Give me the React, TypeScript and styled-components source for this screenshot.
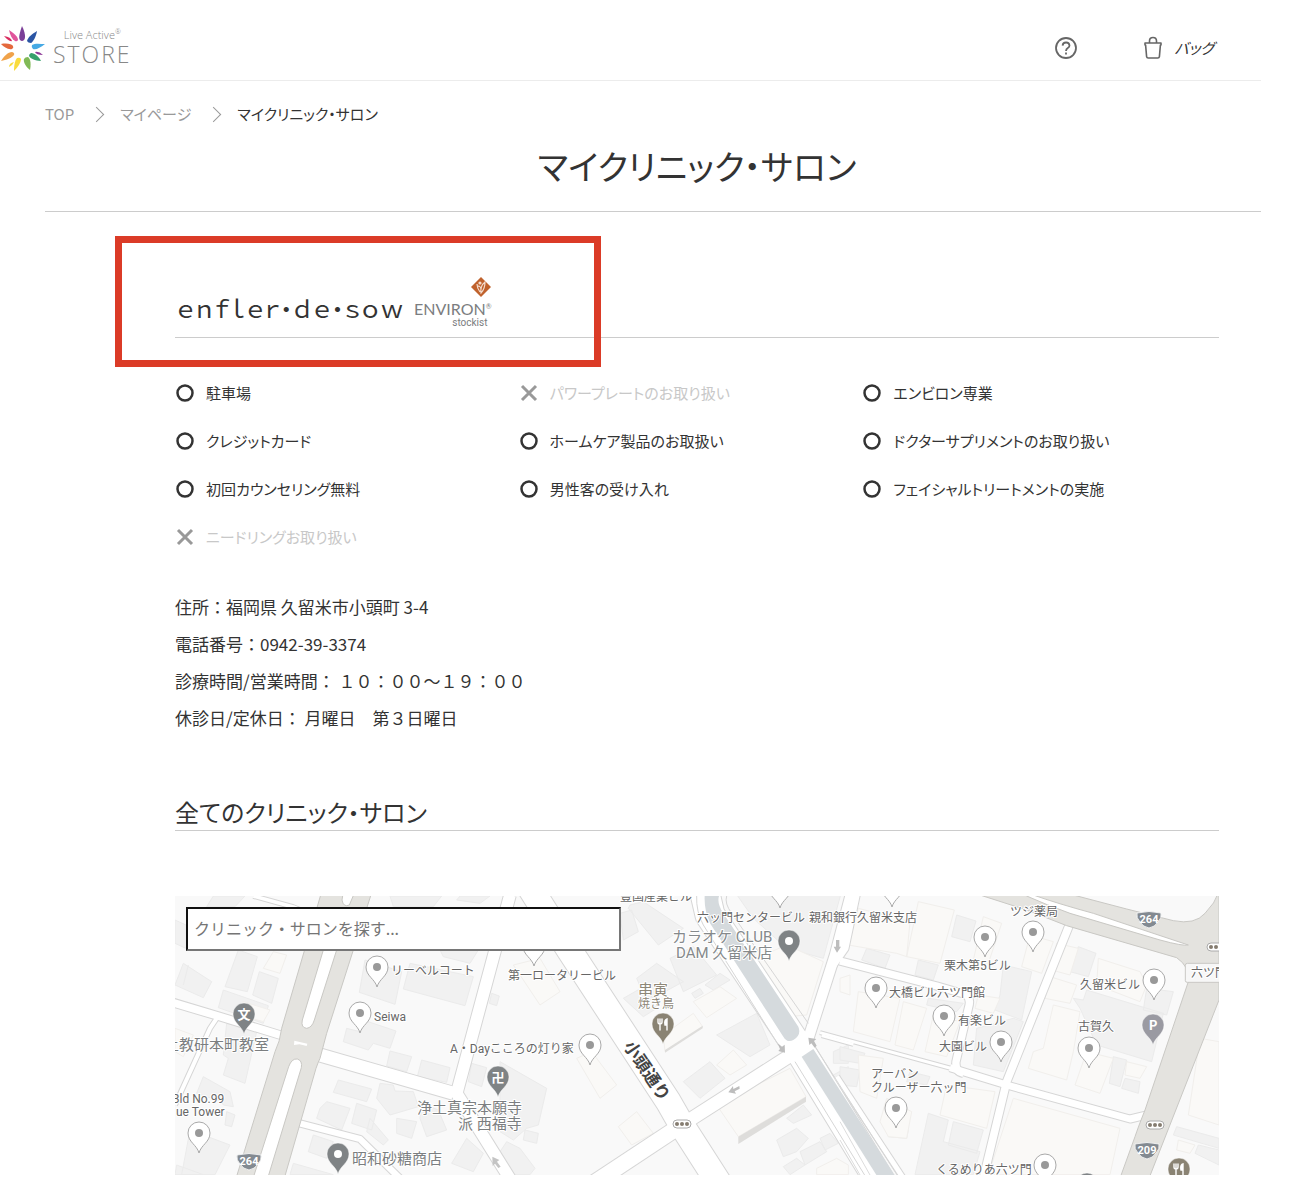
import React from "react";
import styled, { createGlobalStyle } from "styled-components";

const GlobalStyle = createGlobalStyle`
  *, *::before, *::after { box-sizing: border-box; }
  body {
    margin: 0;
    background: #fff;
    color: #333;
    font-family: "Noto Sans CJK JP", "Noto Sans", sans-serif;
    font-size: 16px;
  }
`;

const Page = styled.div`
  padding: 0 45px 11px 0;
`;

const Header = styled.header`
  display: flex;
  align-items: flex-end;
  justify-content: space-between;
  height: 81px;
  border-bottom: 1px solid #ececec;
`;

const LogoLink = styled.a`
  display: flex;
  align-items: flex-start;
  gap: 8px;
  padding-bottom: 8px;
  color: #888;
  text-decoration: none;
`;

const LogoWords = styled.span`
  display: grid;
  justify-items: center;
  padding-top: 1px;
  font-family: "Open Sans", "Noto Sans", sans-serif;
  font-weight: 300;
`;

const LogoSmall = styled.span`
  display: flex;
  align-items: flex-start;
  font-size: 11px;
  line-height: 16px;
`;

const Registered = styled.span`
  font-size: 7px;
  line-height: 10px;
`;

const LogoLarge = styled.span`
  font-size: 23px;
  line-height: 22px;
  letter-spacing: 2px;
`;

const HeaderNav = styled.nav`
  display: flex;
  align-items: center;
  gap: 64px;
  height: 64px;
  padding-right: 47px;
`;

const IconButton = styled.button`
  display: flex;
  padding: 0;
  border: 0;
  background: none;
  color: #666;
  cursor: pointer;
`;

const BagLink = styled.a`
  display: flex;
  align-items: center;
  gap: 10px;
  color: #333;
  font-size: 15px;
  font-style: italic;
  font-feature-settings: "palt";
  line-height: 24px;
  text-decoration: none;
`;

const Main = styled.main`
  padding-left: 45px;
`;

const Crumbs = styled.ol`
  display: flex;
  align-items: center;
  margin: 0;
  padding: 21px 0 0;
  list-style: none;
  font-size: 15px;
  line-height: 24px;
  font-feature-settings: "palt";
`;

const Crumb = styled.li`
  display: flex;
  align-items: center;
  color: #333;

  &:not(:last-child)::after {
    content: "";
    width: 11px;
    height: 11px;
    margin: 0 18px 0 17px;
    border: solid #999;
    border-width: 1px 1px 0 0;
    transform: rotate(45deg);
  }

  a {
    color: #999;
    text-decoration: none;
  }
`;

const PageTitle = styled.h1`
  margin: 0;
  padding: 16px 42px 21px 130px;
  border-bottom: 1px solid #ccc;
  font-size: 34px;
  font-weight: 400;
  line-height: 48px;
  text-align: center;
  font-feature-settings: "palt";
`;

const Content = styled.div`
  padding: 0 42px 0 130px;
`;

const ClinicHeading = styled.div`
  position: relative;
  display: flex;
  align-items: flex-end;
  gap: 9px;
  height: 126px;
  padding: 0 0 9px 2px;
  border-bottom: 1px solid #ccc;
`;

const ClinicName = styled.h2`
  margin: 0;
  font-size: 24px;
  font-weight: 400;
  line-height: 40px;
  letter-spacing: 1px;
  font-feature-settings: "palt";
`;

const Highlight = styled.div`
  position: absolute;
  top: 24px;
  left: -60px;
  width: 486px;
  height: 131px;
  border: 7px solid #db3b27;
  pointer-events: none;
`;

const Stockist = styled.span`
  display: grid;
  justify-items: end;
  color: #7b7d80;
  font-family: Lato, "Noto Sans", sans-serif;
`;

const StockistBrand = styled.span`
  display: flex;
  align-items: flex-start;
  font-size: 16px;
  line-height: 16px;
  margin-top: 4px;
`;

const StockistNote = styled.span`
  padding-right: 4px;
  font-family: Roboto, "Noto Sans", sans-serif;
  font-size: 10px;
  line-height: 11px;
`;

const FeatureList = styled.ul`
  display: grid;
  grid-template-columns: repeat(3, 1fr);
  grid-auto-rows: 48px;
  align-items: center;
  margin: 31px 0 0;
  padding: 0 13px 0 0;
  list-style: none;
`;

const Feature = styled.li<{ $on: boolean }>`
  display: flex;
  align-items: center;
  gap: 12px;
  color: ${(p) => (p.$on ? "#333" : "#c8c8c8")};
  font-size: 15px;
  line-height: 24px;
  font-feature-settings: "palt";
`;

const Details = styled.dl`
  margin: 27px 0 0;
  font-size: 17px;
  line-height: 37px;
`;

const DetailRow = styled.div`
  display: flex;
  white-space: pre;

  dt, dd { margin: 0; }
`;

const SectionTitle = styled.h2`
  margin: 59px 0 65px;
  padding-bottom: 1px;
  border-bottom: 1px solid #ccc;
  font-size: 24px;
  font-weight: 400;
  line-height: 34px;
  font-feature-settings: "palt";
`;

const MapPanel = styled.section`
  position: relative;
  height: 279px;
  overflow: hidden;
  background: #f9f9f9;
`;

const MapSvg = styled.svg`
  display: block;
  width: 100%;
  height: 100%;
`;

const SearchInput = styled.input`
  position: absolute;
  top: 11px;
  left: 11px;
  width: 435px;
  height: 44px;
  padding: 0 6px 2px;
  border: 2px solid;
  border-color: #111 #767676 #767676 #111;
  background: #fff;
  font-family: inherit;
  font-size: 16px;

  &::placeholder { color: #757575; opacity: 1; }
`;

const MapText = styled.text<{ $size?: number; $tone?: string }>`
  fill: ${(p) => p.$tone ?? "#666"};
  stroke: #fff;
  stroke-width: 2px;
  stroke-linejoin: round;
  paint-order: stroke;
  font-family: Roboto, "Noto Sans CJK JP", sans-serif;
  font-size: ${(p) => p.$size ?? 12}px;
`;

const petals: [string, string][] = [
  ["#7b3f98", "M22 0C25 6 26 12 24 14Q22 16 20 14C18 12 20 6 22 0Z"],
  ["#2b55a4", "M37 5C36 11 33 16 31 17Q28 17 27 15C28 11 32 8 37 5Z"],
  ["#46a9e4", "M45 18C40 22 36 24 33 23Q31 21 32 19C35 17 40 18 45 18Z"],
  ["#8d3a97", "M43 29Q36 29 35 26Q39 25 43 29Z"],
  ["#36a06c", "M41 35C35 35 30 32 29 30Q29 28 31 27C35 27 39 31 41 35Z"],
  ["#80b956", "M30 44C26 41 23 36 24 33Q25 31 28 31C31 33 31 39 30 44Z"],
  ["#f9dc3d", "M14 45C14 39 15 34 17 32Q20 31 21 33C21 37 17 42 14 45Z"],
  ["#f9dc3d", "M9 41Q9 37 14 36Q13 39 9 41Z"],
  ["#f0a24a", "M1 35C4 30 8 26 12 26Q15 27 14 29C12 32 6 34 1 35Z"],
  ["#e4693d", "M1 18C7 17 12 18 13 20Q14 22 12 23C8 24 4 21 1 18Z"],
  ["#d92b5f", "M4 10Q11 11 12 15Q9 16 4 10Z"],
  ["#e0559c", "M9 4C14 7 18 11 18 14Q17 16 15 15C12 13 10 9 9 4Z"],
];

const features: [string, boolean][] = [
  ["駐車場", true],
  ["パワープレートのお取り扱い", false],
  ["エンビロン専業", true],
  ["クレジットカード", true],
  ["ホームケア製品のお取扱い", true],
  ["ドクターサプリメントのお取り扱い", true],
  ["初回カウンセリング無料", true],
  ["男性客の受け入れ", true],
  ["フェイシャルトリートメントの実施", true],
  ["ニードリングお取り扱い", false],
];

const details: [string, string][] = [
  ["住所：", "福岡県 久留米市小頭町 3-4"],
  ["電話番号：", "0942-39-3374"],
  ["診療時間/営業時間", "： １０：００〜１９：００"],
  ["休診日/定休日", "： 月曜日　第３日曜日"],
];

/* Map geometry is split in three tiles, each in its own survey grid. */
type Tile = {
  x: number;
  grey: string;
  warm: string;
  roads: [number, string][];
};

const tiles: Tile[] = [
  {
    x: -45,
    grey:
      "M160 33L255 33L225 65L140 65ZM45 105L78 120V190L45 175ZM70 235L155 290L130 338L45 300ZM85 240L70 300M235 195L292 215L262 320L195 305ZM298 260L355 280L335 355L278 330ZM190 315L325 362L310 415L175 368ZM200 415L290 440L255 595L190 570L205 520L190 510ZM615 225L725 260L705 358L598 322ZM750 235L940 275L915 362L730 312ZM840 195H955L930 235L850 215ZM610 405L708 438L690 490L640 475L625 495L550 470L560 430L600 440ZM690 498L755 515L740 560L680 543ZM785 525L870 548L860 592L772 575ZM935 535L980 548L965 605L925 590ZM995 325L1018 333L1010 362L988 355ZM535 585L635 612L620 650L520 622ZM500 650L570 670L545 735L470 700L480 670ZM590 655L650 675L635 735L575 715ZM660 595L700 600L705 618L760 620L775 665L690 690L650 640ZM130 575L210 620L220 665L190 660L185 650L110 625ZM90 735L210 780L165 869H65ZM200 680L225 690L215 725L195 720ZM630 700L685 765L670 780L620 740ZM710 700L770 710L755 760L710 745ZM785 655L835 675L860 735L800 755L780 700ZM920 760L970 805L940 860L875 835ZM460 750L520 770L500 820L445 800ZM400 835L520 869H390ZM690 33H845L820 65H700ZM900 33H990L960 55L890 45ZM50 840L130 869H45Z",
    warm: "M340 200L380 210L360 265L310 250ZM45 430L100 450L70 515L45 500ZM250 350L330 375L310 410L240 390Z",
    roads: [
      [26, "M30 350L180 395L380 456"],
      [15, "M170 400L150 430L45 660"],
      [42, "M480 510L880 625"],
      [38, "M1050 30L890 625L1080 930"],
      [22, "M415 714L600 762L740 900"],
      [14, "M280 33L400 66L480 100"],
    ],
  },
  {
    x: 975,
    grey:
      "M390 60L430 50L550 130L475 180L385 70ZM360 85L395 75L415 140L370 165ZM470 235L550 290L440 350L410 280ZM510 220L580 185L650 270L550 320ZM370 340L440 300L470 370L430 395ZM615 300L660 265L690 285L640 315ZM690 0H1030L970 220L860 190L760 100ZM650 450L770 385L810 480L750 515ZM550 590L630 530L675 580L600 640ZM575 325L600 310L610 325L585 340ZM0 530L140 610L115 720L80 730L40 765L0 740ZM75 735L115 745L110 775L70 765ZM20 770L60 790L105 850L90 869H40L0 800ZM740 630L780 600L800 610L750 645ZM860 700L910 660L935 690L880 715ZM830 765L890 730L925 760L890 800L850 815ZM900 800L960 770L980 800L915 840ZM960 760L990 745L1015 775L975 795ZM850 845L890 820L915 840L870 869ZM1000 500L1045 480V535H1000ZM1000 570L1045 545V600H1020Z",
    warm: "M745 230L860 180L970 230L920 390L860 395ZM40 240L120 220L180 320L120 360ZM580 350L660 305L710 340L620 398ZM490 450L580 385L608 425L495 500ZM650 540L700 495L740 540L690 570ZM230 520L275 500L350 600L300 640ZM355 725L410 680L460 745L395 780ZM650 660L870 550L918 635L715 755ZM950 850L1010 820L1045 840V869H950ZM1020 280L1050 270V330L1020 320Z",
    roads: [
      [78, "M85 0L208 195L505 650L545 720L670 915"],
      [50, "M250 915L545 720"],
      [42, "M545 720L865 515L925 450"],
      [34, "M925 460L1005 210L1060 0"],
      [90, "M600 -40L630 90L890 480L1140 890"],
      [12, "M965 452L1060 478"],
    ],
  },
  {
    x: 1995,
    grey:
      "M350 90L408 108L390 170L335 155ZM80 190L150 210L135 250L65 225ZM235 225L295 240L280 285L225 270ZM490 240L575 260L545 405L465 375L480 330ZM715 185L768 205L745 275L690 260ZM265 340L370 355L350 380L260 360ZM700 340L730 345L740 315L970 385L935 530L770 480L720 370ZM920 310L1000 320L980 390L910 375ZM820 515L860 525L840 605L808 595ZM855 580L900 590L895 625L845 610ZM410 430L520 400L550 410L490 560L400 540ZM0 485L75 505L60 535L0 525ZM0 545L60 555L50 605L0 600ZM210 560L270 575L260 600L200 590ZM265 685L325 705L310 770L420 800L400 869H225ZM340 710L430 735L410 805L325 780ZM1010 725L1137 760V790L1000 750ZM1075 780L1137 795V840L1065 805ZM145 740L205 735L200 760L145 755Z",
    warm: "M55 70L210 110L200 215L170 205L25 180ZM235 50L343 75L300 235L200 215ZM430 95L485 115L445 235L400 225ZM570 150L640 170L605 265L545 245ZM650 175L715 190L690 270L635 255ZM775 220L900 260L920 300L900 350L770 300ZM630 275L710 300L690 355L615 340ZM55 320L180 340L150 470L40 440ZM190 350L260 370L220 495L165 480ZM280 390L360 410L320 515L255 500ZM640 360L720 380L700 500L680 585L565 550L580 500L610 490ZM740 500L820 520L780 625L705 600ZM860 530L920 545L900 580L855 570ZM415 330L480 340L460 385L405 370ZM55 510L130 520L110 640L60 620ZM320 600L465 620L440 730L300 690ZM140 640L215 680L200 760L145 755L120 710ZM520 640L840 730L810 869H445ZM1080 460L1137 470V720L1045 690ZM1015 765L1065 780L1050 805L1010 795Z",
    roads: [
      [25, "M0 228L290 303L375 328Q395 338 385 370L348 530Q345 560 370 565"],
      [24, "M55 0L15 190L-20 240"],
      [12, "M-60 443L340 552"],
      [24, "M330 548L500 600L870 702L920 690"],
      [26, "M700 90L500 590L425 900"],
      [18, "M-10 575L210 910"],
    ],
  },
];

const OFFSET_Y = -33;

type PinKind = "place" | "dark" | "food" | "parking";
const pins: [number, number, PinKind, string?][] = [
  [202, 71, "place"],
  [185, 117, "place"],
  [24, 237, "place"],
  [359, 50, "place"],
  [415, 149, "place"],
  [605, -8, "place"],
  [717, -9, "place"],
  [810, 41, "place"],
  [858, 36, "place"],
  [701, 92, "place"],
  [769, 120, "place"],
  [826, 146, "place"],
  [979, 84, "place"],
  [914, 152, "place"],
  [721, 212, "place"],
  [870, 269, "place"],
  [912, 288, "dark", ""],
  [69, 118, "dark", "文"],
  [323, 181, "dark", "卍"],
  [163, 258, "dark", ""],
  [614, 45, "dark", ""],
  [488, 128, "food"],
  [1004, 273, "food"],
  [978, 129, "parking", "P"],
];

type Label = { x: number; y: number; t: string; size?: number; tone?: string };
const labels: Label[] = [
  { x: 216, y: 79, t: "リーベルコート" },
  { x: 199, y: 125, t: "Seiwa" },
  { x: -11, y: 154, t: "土教研本町教室", size: 15, tone: "#7b7e80" },
  { x: -3, y: 207, t: "Bld No.99" },
  { x: 1, y: 220, t: "ue Tower" },
  { x: 275, y: 157, t: "A・Dayこころの灯り家" },
  { x: 242, y: 217, t: "浄土真宗本願寺", size: 15, tone: "#7b7e80" },
  { x: 283, y: 233, t: "派 西福寺", size: 15, tone: "#7b7e80" },
  { x: 177, y: 268, t: "昭和砂糖商店", size: 15, tone: "#7b7e80" },
  { x: 333, y: 84, t: "第一ロータリービル" },
  { x: 445, y: 5, t: "豊国産業ビル" },
  { x: 522, y: 26, t: "六ッ門センタービル" },
  { x: 634, y: 26, t: "親和銀行久留米支店" },
  { x: 497, y: 46, t: "カラオケ CLUB", size: 15, tone: "#85898b" },
  { x: 501, y: 62, t: "DAM 久留米店", size: 15, tone: "#85898b" },
  { x: 463, y: 99, t: "串寅", size: 15, tone: "#8e8778" },
  { x: 463, y: 112, t: "焼き鳥", tone: "#8e8778" },
  { x: 835, y: 20, t: "ツジ薬局" },
  { x: 769, y: 74, t: "栗木第5ビル" },
  { x: 714, y: 101, t: "大橋ビル六ツ門館" },
  { x: 783, y: 129, t: "有楽ビル" },
  { x: 764, y: 155, t: "大園ビル" },
  { x: 905, y: 93, t: "久留米ビル" },
  { x: 903, y: 135, t: "古賀久" },
  { x: 696, y: 182, t: "アーバン" },
  { x: 696, y: 196, t: "クルーザー六ッ門" },
  { x: 761, y: 278, t: "くるめりあ六ツ門" },
];

const pinColor: Record<PinKind, string> = {
  place: "#fff",
  dark: "#7f8385",
  food: "#8a8373",
  parking: "#9a9aa2",
};

function Pin({ x, y, kind, mark }: { x: number; y: number; kind: PinKind; mark?: string }) {
  const light = kind === "place";
  return (
    <g transform={`translate(${x} ${y})`}>
      <path
        d="M0 20C-2 12 -11 9 -11 0A11 11 0 0 1 11 0C11 9 2 12 0 20Z"
        fill={pinColor[kind]}
        stroke={light ? "#a9a9a9" : "#fff"}
        strokeWidth={light ? 1 : 0.5}
      />
      {(light || mark === "") && <circle r="4" fill={light ? "#999" : "#fff"} />}
      {mark && (
        <text y="5" textAnchor="middle" fill="#fff" fontSize="13" fontWeight="700">
          {mark}
        </text>
      )}
      {kind === "food" && (
        <g fill="none" stroke="#fff" strokeWidth="1.4" strokeLinecap="round">
          <path d="M-5 -5V-2Q-5 0 -3 0T-1 -2V-5M-3 -5V6" />
          <path d="M4 6V-5Q1 -4 2 1H4" fill="#fff" />
        </g>
      )}
    </g>
  );
}

function Shield({ x, y, n }: { x: number; y: number; n: string }) {
  return (
    <g transform={`translate(${x} ${y})`}>
      <path
        d="M-12 -6Q0 -9 12 -6Q13 -1 9 3Q6 8 0 9Q-6 8 -9 3Q-13 -1 -12 -6Z"
        fill="#838a91"
        stroke="#fff"
        strokeWidth="0.8"
      />
      <text y="4" textAnchor="middle" fill="#fff" fontFamily="Roboto" fontSize="11" fontWeight="700">
        {n}
      </text>
    </g>
  );
}

function Signal({ x, y }: { x: number; y: number }) {
  return (
    <g transform={`translate(${x} ${y})`}>
      <rect x="-9" y="-4" width="18" height="8" rx="4" fill="#fff" stroke="#aaa" />
      {[-5, 0, 5].map((cx) => (
        <circle key={cx} cx={cx} r="2" fill="#857c70" />
      ))}
    </g>
  );
}

function StreetMap() {
  const place = (x: number) => `translate(${x} ${OFFSET_Y})`;
  return (
    <MapSvg viewBox="0 0 1044 279" preserveAspectRatio="xMidYMid slice" role="img" aria-label="地図">
      <g transform={`scale(${1 / 3})`}>
        {tiles.map((t) => (
          <g key={t.x} transform={place(t.x)} strokeWidth="3" strokeLinejoin="round">
            <path d={t.grey} fill="#f1f1f1" stroke="#ebebeb" />
            <path d={t.warm} fill="#faf9f7" stroke="#f1efec" />
          </g>
        ))}
        <g transform={place(975)} fill="#dedddb">
          <path d="M715 755L918 635V650L715 777Z" />
          <path d="M495 495L608 422V430L495 503Z" />
        </g>
        {["#d6d6d6", "#fff"].map((stroke, pass) =>
          tiles.map((t) => (
            <g
              key={`${pass}-${t.x}`}
              transform={place(t.x)}
              fill="none"
              stroke={stroke}
              strokeLinejoin="round"
            >
              {t.roads.map(([w, d]) => (
                <path key={d} d={d} strokeWidth={pass ? w - 3 : w + 3} />
              ))}
            </g>
          ))
        )}
        <g transform={place(975)}>
          <path d="M590 33Q588 80 610 120L835 480M680 33Q673 55 695 85L925 415" fill="none" stroke="#d6d6d6" strokeWidth="3" />
          <path d="M614 33H657Q650 55 670 85L895 425Q905 450 880 465Q862 475 850 455L630 115Q612 75 614 33Z" fill="#d5dadd" />
          <path d="M905 515L940 492L1200 895L1145 895Z" fill="#d5dadd" />
          <path d="M885 530L1100 880M945 485L1220 915" fill="none" stroke="#d6d6d6" strokeWidth="3" />
          <g fill="#bdbdbd">
            <path d="M1008 165H1018V185H1023L1011 203L1001 185H1008Z" />
            <path d="M833 475L846 485L854 479L855 503L835 498L840 492Z" />
            <path d="M925 458L949 462L942 468L950 482L944 488L934 475L928 480Z" />
            <path d="M718 603L700 612L699 603L685 622L708 626L704 619L719 611Z" />
          </g>
        </g>
        <g transform={place(-45)}>
          <path
            d="M485 20L365 430Q360 470 345 500L225 890H370L468 550Q475 530 480 520L500 445L636 20Z"
            fill="#e4e3df"
            stroke="#c9c8c4"
            strokeWidth="3"
          />
          <path
            d="M550 20L546 45Q550 68 568 60L585 20ZM490 195L427 405Q422 428 440 430Q456 428 463 405L530 195ZM386 545Q395 520 412 522Q428 527 424 548L320 890H276Z"
            fill="#fff"
            stroke="#c9c8c4"
            strokeWidth="3"
          />
          <path d="M403 467L442 476L440 483L428 480L418 478L402 480Z" fill="#fff" />
          <path d="M997 815L1018 825L1011 830L1022 845L1015 849L1005 836L998 843Z" fill="#c4c4c4" />
        </g>
        <g transform={place(1995)} strokeWidth="3" stroke="#c9c8c4">
          <path
            d="M420 30L600 30L700 30L860 72L1000 107Q1065 120 1095 85Q1125 55 1137 20V345L925 885H838L885 755Q895 725 915 675L1045 290Q1050 245 1010 218L680 122L560 75Z"
            fill="#e4e3df"
          />
          <path d="M580 30Q650 55 760 85L1045 180Q1030 184 960 165L690 85Q620 60 560 33Z" fill="#fff" />
          <path d="M1160 235H1042Q1036 235 1036 241V287Q1036 292 1042 292H1160Z" fill="#f7f7f7" />
          <path d="M0 710L90 870M0 765L60 870" fill="none" stroke="#dcdcdc" />
        </g>
      </g>
      <Shield x={74} y={265} n="264" />
      <Shield x={974} y={23} n="264" />
      <Shield x={972} y={254} n="209" />
      <Signal x={507} y={228} />
      <Signal x={980} y={229} />
      <Signal x={1041} y={51} />
      {pins.map(([x, y, kind, mark]) => (
        <Pin key={`${x}-${y}`} x={x} y={y} kind={kind} mark={mark} />
      ))}
      {labels.map((l) => (
        <MapText key={l.t} x={l.x} y={l.y} $size={l.size} $tone={l.tone}>
          {l.t}
        </MapText>
      ))}
      <MapText x={1016} y={81}>六ツ門</MapText>
      <MapText transform="translate(448 150) rotate(56)" $size={17} $tone="#444" fontWeight="700">
        小頭通り
      </MapText>
    </MapSvg>
  );
}

export default function App() {
  return (
    <>
      <GlobalStyle />
      <Page>
        <Header>
          <LogoLink href="#" aria-label="Live Active STORE">
            <svg width="45" height="46" viewBox="0 0 45 46" aria-hidden="true">
              {petals.map(([fill, d]) => (
                <path key={d} d={d} fill={fill} />
              ))}
            </svg>
            <LogoWords>
              <LogoSmall>
                Live Active<Registered>®</Registered>
              </LogoSmall>
              <LogoLarge>STORE</LogoLarge>
            </LogoWords>
          </LogoLink>
          <HeaderNav>
            <IconButton type="button" aria-label="ヘルプ">
              <svg width="24" height="24" viewBox="0 0 24 24" fill="none" stroke="currentColor" strokeWidth="1.8">
                <circle cx="12" cy="12" r="10" />
                <path d="M8.6 9.6Q8.8 6.6 12 6.5T15.5 9.5Q15.5 11 13.8 12T12 15" />
                <path d="M12 16.6V18.4" />
              </svg>
            </IconButton>
            <BagLink href="#">
              <svg width="22" height="24" viewBox="0 0 22 24" fill="none" stroke="#666" strokeWidth="1.6" strokeLinejoin="round">
                <path d="M3 7H19V9H18.4L17.4 20.6Q17.2 22 15.8 22H6.2Q4.8 22 4.6 20.6L3.6 9H3Z" />
                <path d="M7.5 7V5Q7.5 1.5 11 1.5T14.5 5V7" />
              </svg>
              バッグ
            </BagLink>
          </HeaderNav>
        </Header>
        <Main>
          <nav aria-label="パンくず">
            <Crumbs>
              <Crumb><a href="#">TOP</a></Crumb>
              <Crumb><a href="#">マイページ</a></Crumb>
              <Crumb aria-current="page">マイクリニック・サロン</Crumb>
            </Crumbs>
          </nav>
          <PageTitle>マイクリニック・サロン</PageTitle>
          <Content>
            <ClinicHeading>
              <ClinicName>ｅｎｆｌｅｒ・ｄｅ・ｓｏｗ</ClinicName>
              <Stockist>
                <svg width="20" height="20" viewBox="0 0 20 20" aria-hidden="true">
                  <path d="M10 0L20 10L10 20L0 10Z" fill="#c0622d" />
                  <circle cx="9" cy="6" r="1.6" fill="#f3dccd" />
                  <path d="M6 7Q6 11 9 15M14 5Q9 9 10 16Q14 12 14 5ZM7 9Q10 9 10 13" fill="none" stroke="#f3dccd" strokeWidth="1.2" />
                </svg>
                <StockistBrand>
                  ENVIRON<Registered>®</Registered>
                </StockistBrand>
                <StockistNote>stockist</StockistNote>
              </Stockist>
              <Highlight />
            </ClinicHeading>
            <FeatureList>
              {features.map(([name, on]) => (
                <Feature key={name} $on={on}>
                  <svg width="19" height="20" viewBox="0 0 19 20" fill="none" aria-hidden="true">
                    {on ? (
                      <circle cx="10" cy="10" r="7.5" stroke="#333" strokeWidth="2.5" />
                    ) : (
                      <path d="M3 3L17 17M17 3L3 17" stroke="#999" strokeWidth="3" />
                    )}
                  </svg>
                  {name}
                </Feature>
              ))}
            </FeatureList>
            <Details>
              {details.map(([term, value]) => (
                <DetailRow key={term}>
                  <dt>{term}</dt>
                  <dd>{value}</dd>
                </DetailRow>
              ))}
            </Details>
            <SectionTitle>全てのクリニック・サロン</SectionTitle>
            <MapPanel>
              <StreetMap />
              <SearchInput type="text" aria-label="クリニック・サロンを探す" placeholder="クリニック・サロンを探す..." />
            </MapPanel>
          </Content>
        </Main>
      </Page>
    </>
  );
}
